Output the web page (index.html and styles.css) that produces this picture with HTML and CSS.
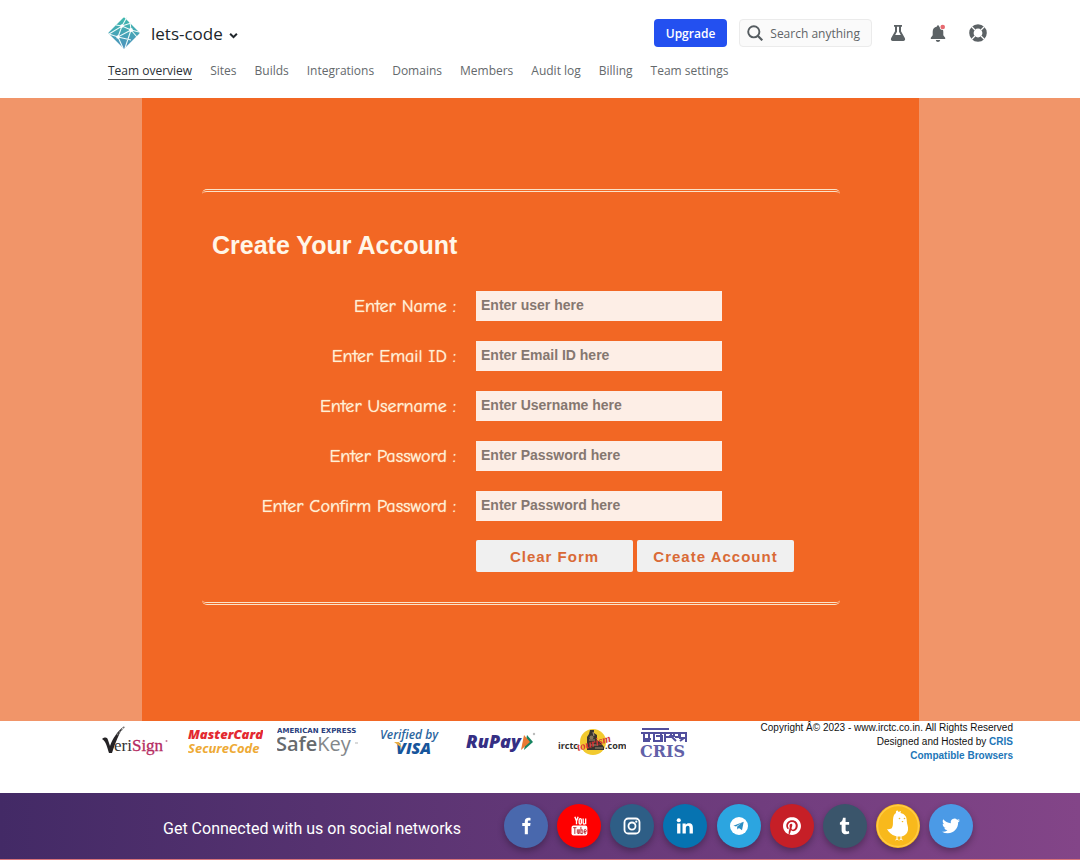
FILE: index.html
```html
<!DOCTYPE html>
<html lang="en">
<head>
<meta charset="utf-8">
<meta name="viewport" content="width=device-width, initial-scale=1">
<title>Create Your Account</title>
<link rel="stylesheet" href="styles.css">
</head>
<body>
<header class="header">
  <div class="topbar">
    <button class="team" type="button">
      <svg class="team-logo" viewBox="0 0 32 32" aria-hidden="true">
        <defs><linearGradient id="teal" x1="0" y1="0" x2="0" y2="1"><stop offset="0" stop-color="#3fb8ae"/><stop offset="1" stop-color="#4d93bd"/></linearGradient></defs>
        <path d="M16 1.500 30.500 16 16 30.500 1.500 16z" fill="url(#teal)" stroke="url(#teal)" stroke-width="2" stroke-linejoin="round"/>
        <path d="M1 17l13-8 9 4 8 2M14 9l5-9M14 9 8 8M23 13l-1-8M23 13 10 20 1 17M10 20l5 11M10 20l13 3M23 13l-3 9-3 9M14 9l-4 11M23 13l6 7M14 9l9-3" fill="none" stroke="#eefaf9" stroke-width="1.100"/>
        <circle cx="14" cy="9" r="1.700" fill="#fff"/><circle cx="23" cy="13" r="1.900" fill="#fff"/><circle cx="10" cy="20" r="1.800" fill="#fff"/>
      </svg>
      <span>lets-code</span>
      <svg class="caret" viewBox="0 0 8 8" aria-hidden="true"><path d="M1 2.500 4 5.500 7 2.500" fill="none" stroke="#20262b" stroke-width="1.800"/></svg>
    </button>
    <div class="tools">
      <button class="upgrade" type="button">Upgrade</button>
      <button class="search" type="button">
        <svg viewBox="0 0 16 16" aria-hidden="true"><circle cx="6.800" cy="6.800" r="5.600" fill="none" stroke="#555c60" stroke-width="1.900"/><path d="M11 11l4.300 4.300" stroke="#555c60" stroke-width="2.200"/></svg>
        <span>Search anything</span>
      </button>
      <button class="tool" type="button" aria-label="Labs">
        <svg viewBox="0 0 18 18" aria-hidden="true"><path d="M5 1h8v1.800h-1v4.500l3.800 6.700c.9 1.600 0 3-1.500 3H3.700c-1.500 0-2.400-1.400-1.500-3L6 7.300V2.800H5zM8 2.800v5L6.200 11h5.600L10 7.800v-5z" fill="#5c6265" fill-rule="evenodd"/></svg>
      </button>
      <button class="tool" type="button" aria-label="Notifications">
        <svg viewBox="0 0 18 18" aria-hidden="true"><path d="M8 1.500h2v1c2.800.5 4.300 2.400 4.300 5.200v3.500l1.900 2.600v1.200H1.800v-1.200l1.900-2.600V7.700C3.700 4.900 5.200 3 8 2.500zM6.800 16h4.400c-.2 1.200-1 2-2.200 2s-2-.8-2.200-2z" fill="#5c6265"/><circle cx="13.700" cy="3" r="3" fill="#fff"/><circle cx="13.700" cy="3" r="2.300" fill="#e66a70"/></svg>
      </button>
      <button class="tool" type="button" aria-label="Help">
        <svg viewBox="0 0 18 18" aria-hidden="true"><circle cx="9" cy="9" r="6.600" fill="none" stroke="#5c6265" stroke-width="4.400"/><path d="M2 2l4 4M16 2l-4 4M2 16l4-4M16 16l-4-4" stroke="#fff" stroke-width="1.200"/></svg>
      </button>
    </div>
  </div>
  <nav class="nav" aria-label="Team">
    <a class="active" href="#overview">Team overview</a>
    <a href="#sites">Sites</a>
    <a href="#builds">Builds</a>
    <a href="#integrations">Integrations</a>
    <a href="#domains">Domains</a>
    <a href="#members">Members</a>
    <a href="#audit">Audit log</a>
    <a href="#billing">Billing</a>
    <a href="#settings">Team settings</a>
  </nav>
</header>

<main class="main">
  <section class="panel">
    <form class="form">
      <h1>Create Your Account</h1>
      <div class="fields">
        <label for="name">Enter Name :</label><input id="name" type="text" placeholder="Enter user here">
        <label for="email">Enter Email ID :</label><input id="email" type="email" placeholder="Enter Email ID here">
        <label for="user">Enter Username :</label><input id="user" type="text" placeholder="Enter Username here">
        <label for="pass">Enter Password :</label><input id="pass" type="password" placeholder="Enter Password here">
        <label for="confirm">Enter Confirm Password :</label><input id="confirm" type="password" placeholder="Enter Password here">
        <div class="actions">
          <button type="reset">Clear Form</button>
          <button type="submit">Create Account</button>
        </div>
      </div>
    </form>
  </section>
</main>

<section class="partners">
  <div class="logos">
    <svg width="72" height="42" viewBox="0 0 72 42" role="img" aria-label="VeriSign">
      <path d="M0 18c3-2 5-2 6 1l2 6C11 17 15 11 21 6 17 13 13 22 10 32H7C5 26 4 20 0 18z" fill="#252326"/>
      <path d="M15 14 23 5" stroke="#777" stroke-width="1.500" stroke-dasharray="2 1"/>
      <text x="12" y="30" font-family="Liberation Serif, serif" font-size="17" fill="#333">eri<tspan fill="#b52b62" stroke="#b52b62" stroke-width=".3">Sign</tspan></text>
      <circle cx="64.500" cy="20" r="1" fill="#c77998"/>
    </svg>
    <svg width="75" height="42" viewBox="0 0 75 42" role="img" aria-label="MasterCard SecureCode">
      <g font-family="Open Sans, sans-serif" font-style="italic" font-size="13"><text x="0" y="18" font-weight="800" fill="#e32931">MasterCard</text><text x="0" y="32" font-weight="700" fill="#eeaa35">SecureCode</text></g>
    </svg>
    <svg width="89" height="42" viewBox="0 0 89 42" role="img" aria-label="American Express SafeKey">
      <text x="0" y="12" font-family="DejaVu Sans, sans-serif" font-weight="700" font-size="7" fill="#293d7c">AMERICAN EXPRESS</text>
      <text x="-1" y="30" font-family="Open Sans, sans-serif" font-size="20" fill="#666a6d"><tspan font-weight="600">Safe</tspan><tspan fill="#83878a">Key</tspan></text>
      <path d="M78 22h3" stroke="#b5b5b5"/>
    </svg>
    <svg width="72" height="42" viewBox="0 0 72 42" role="img" aria-label="Verified by VISA">
      <text x="0" y="18" font-family="Open Sans, sans-serif" font-style="italic" font-weight="600" font-size="12" fill="#2a659e">Verified by</text>
      <text x="16" y="33" font-family="Open Sans, sans-serif" font-style="italic" font-weight="800" font-size="16" fill="#17559b">VISA</text>
      <path d="M14 21h5l3 6z" fill="#eaae43"/>
    </svg>
    <svg width="78" height="42" viewBox="0 0 78 42" role="img" aria-label="RuPay">
      <text x="0" y="27" font-family="Open Sans, sans-serif" font-style="italic" font-weight="800" font-size="18" fill="#352f84">RuPay</text>
      <path d="M61 14l6 7-9 8z" fill="#168461"/><path d="M58 14l6 7-9 8z" fill="#e97a32"/><circle cx="68" cy="13" r="1.200" fill="#bbb"/>
    </svg>
    <svg width="68" height="42" viewBox="0 0 68 42" role="img" aria-label="irctc tourism .com">
      <circle cx="35" cy="21" r="13" fill="#f2ca2f"/>
      <path d="M29 29V16l2-3 1-4h4v3l3 2v5l4 3 3 4v3H35z" fill="#39352f"/><path d="M31 19h6M32 24h8M35 11l1 4M37 27h8" stroke="#a18d75" stroke-width="1.200"/><circle cx="33.500" cy="16.500" r="2" fill="#87775d"/>
      <g font-family="Open Sans, sans-serif" font-weight="700" font-size="9" fill="#33312f"><text x="0" y="28">irctc</text><text x="47" y="28">.com</text></g>
      <text x="20" y="30" transform="rotate(-16 20 30)" font-family="Liberation Serif, serif" font-style="italic" font-weight="700" font-size="11" fill="#d73535">tourism</text>
    </svg>
    <svg width="48" height="42" viewBox="0 0 48 42" role="img" aria-label="CRIS">
      <g fill="none" stroke="#514f9d" stroke-width="2"><path d="M2 8h27M1 12h46M4 12v8h5v-8M3 18h8M14 12v8h8v-5h-6M21 12v8M25 12v9M25 16h6v-4M34 12v3h-3l5 5M39 12v4h-4M40 20l4-3h-4v-4M46 12v9"/></g>
      <text x="0" y="36" font-family="DejaVu Serif, serif" font-weight="700" font-size="16" fill="#6261a8">CRIS</text>
    </svg>
  </div>
  <div class="legal">
    <p>Copyright Â© 2023 - www.irctc.co.in. All Rights Reserved</p>
    <p>Designed and Hosted by <a href="#cris">CRIS</a></p>
    <p><a href="#browsers">Compatible Browsers</a></p>
  </div>
</section>

<footer class="social">
  <p>Get Connected with us on social networks</p>
  <div class="networks">
    <a class="facebook" href="#facebook" aria-label="Facebook"><svg viewBox="0 0 24 24"><path d="M14.500 8V6.200c0-1 .4-1.400 1.500-1.400h2V1.200C17.500 1.100 16.500 1 15.400 1 12.200 1 10.400 2.700 10.400 5.800V8H7v4h3.400v11h4.100V12h3l.6-4z"/></svg></a>
    <a class="youtube" href="#youtube" aria-label="YouTube"><svg viewBox="0 0 24 24"><path d="M7 1l2 5v4M11 1 9 6M12.200 4.500v4q0 1.300 1.300 1.300t1.300-1.300v-4q0-1.300-1.300-1.300t-1.300 1.300M17 3v5.500q0 2 3 .5V3v7" fill="none" stroke="#fff" stroke-width="1.600"/><rect x="3" y="11.500" width="19" height="12" rx="2.500"/><path d="M5 14h4M7 14v7.500M10 16v4.200q0 1.200 2 .5V16v5.500M14.300 13v8.500M14.300 17q2.300-1.500 2.300.7v2.300q0 2-2.300 1M20.500 20q-2 2.500-2-.5v-2q0-2 1.300-1.500t.7 2.800h-2" fill="none" stroke="#b62027" stroke-width="1.100"/></svg></a>
    <a class="instagram" href="#instagram" aria-label="Instagram"><svg viewBox="0 0 24 24"><g fill="none" stroke="#fff" stroke-width="2.400"><rect x="2" y="2" width="20" height="20" rx="5"/><circle cx="12" cy="12" r="4.700"/></g><circle cx="17.700" cy="6.300" r="1.500"/></svg></a>
    <a class="linkedin" href="#linkedin" aria-label="LinkedIn"><svg viewBox="0 0 24 24"><circle cx="3.700" cy="4.200" r="2.700"/><path d="M1.500 8.500h4.400V22H1.500zM8.700 8.500h4.200v1.900c.8-1.400 2.200-2.200 4.200-2.200 4.300 0 5.400 2.600 5.400 6.400V22h-4.400v-6.800c0-2-.4-3.400-2.300-3.400s-2.700 1.400-2.700 3.300V22H8.700z"/></svg></a>
    <a class="telegram" href="#telegram" aria-label="Telegram"><svg viewBox="0 0 24 24"><circle cx="12" cy="12" r="12"/><path d="M4.500 11.800 18.300 6.400 16 17.800l-4.100-3-2 2-.5-3.800 6-5.200-7.300 4.700z" fill="#2c8fc4"/></svg></a>
    <a class="pinterest" href="#pinterest" aria-label="Pinterest"><svg viewBox="0 0 24 24"><path d="M12.017 0C5.396 0 .029 5.367.029 11.987c0 5.079 3.158 9.417 7.618 11.162-.105-.949-.199-2.403.041-3.439.219-.937 1.406-5.957 1.406-5.957s-.359-.72-.359-1.781c0-1.663.967-2.911 2.168-2.911 1.024 0 1.518.769 1.518 1.688 0 1.029-.653 2.567-.992 3.992-.285 1.193.6 2.165 1.775 2.165 2.128 0 3.768-2.245 3.768-5.487 0-2.861-2.063-4.869-5.008-4.869-3.41 0-5.409 2.562-5.409 5.199 0 1.033.394 2.143.889 2.741.099.12.112.225.085.345-.09.375-.293 1.199-.334 1.363-.053.225-.172.271-.401.165-1.495-.69-2.433-2.878-2.433-4.646 0-3.776 2.748-7.252 7.92-7.252 4.158 0 7.392 2.967 7.392 6.923 0 4.135-2.607 7.462-6.233 7.462-1.214 0-2.354-.629-2.758-1.379l-.749 2.848c-.269 1.045-1.004 2.352-1.498 3.146 1.123.345 2.306.535 3.55.535 6.607 0 11.985-5.365 11.985-11.987C23.97 5.39 18.592.026 11.985.026z"/></svg></a>
    <a class="tumblr" href="#tumblr" aria-label="Tumblr"><svg viewBox="0 0 24 24"><path d="M17.700 22c-1.300.7-2.900 1-4.500 1-4.300 0-5.700-2.400-5.700-5.400v-7.300H5.200V7.200C8 6.300 9 4 9.300 1h3.500v5.500h4.700v3.800h-4.700v6.700c0 1.500.7 2.200 2.100 2.200.8 0 1.600-.2 2.300-.5z"/></svg></a>
    <a class="koo" href="#koo" aria-label="Koo"><svg viewBox="0 0 44 44"><circle cx="22" cy="22" r="20.500" fill="none" stroke="#ffcb45" stroke-width="1.500"/><path d="M20 9c-.5-2 1-3 2-2l.5 1L25 7l-.5 2c4.500 1 6.500 4 6.300 8.500.1 3 1.700 5 1.200 8.500C31 32 25 33.500 19.500 32c-4-1-7-4-8.500-7 2 .5 4 .3 5-1.200 1.300-2 .8-5 1-8C17.200 12.500 18 10 20 9z"/><path d="M21 32v3l-1.500 1M21 35l1.500 1M25 32v3l-1.500 1M25 35l1.500 1" fill="none" stroke="#fff"/><circle cx="23.500" cy="14.500" r=".8" fill="#e9b92e"/><circle cx="28.500" cy="14.500" r=".8" fill="#e9b92e"/><path d="M25.500 17h2l-1 1.500z" fill="#f3b71c"/></svg></a>
    <a class="twitter" href="#twitter" aria-label="Twitter"><svg viewBox="0 0 24 24"><path d="M23.953 4.570a10 10 0 01-2.825.775 4.958 4.958 0 002.163-2.723c-.951.555-2.005.959-3.127 1.184a4.920 4.920 0 00-8.384 4.482C7.690 8.095 4.067 6.130 1.640 3.162a4.822 4.822 0 00-.666 2.475c0 1.710.870 3.213 2.188 4.096a4.904 4.904 0 01-2.228-.616v.060a4.923 4.923 0 003.946 4.827 4.996 4.996 0 01-2.212.085 4.936 4.936 0 004.604 3.417 9.867 9.867 0 01-6.102 2.105c-.390 0-.779-.023-1.170-.067a13.995 13.995 0 007.557 2.209c9.053 0 13.998-7.496 13.998-13.985 0-.210 0-.420-.015-.630A9.935 9.935 0 0024 4.590z"/></svg></a>
  </div>
</footer>
</body>
</html>
```
FILE: styles.css
```css
* { box-sizing: border-box; }
body {
  margin: 0;
  background: #fff;
  color: #111;
  font-family: "Liberation Sans", Arial, sans-serif;
}
button { font-family: inherit; border: 0; padding: 0; cursor: pointer; }
p, h1 { margin: 0; }
a { text-decoration: none; }

.header {
  padding: 17px 93px 18px 108px;
  font-family: "Open Sans", "Segoe UI", sans-serif;
}
.topbar { display: flex; justify-content: space-between; align-items: center; }
.team {
  display: flex;
  align-items: center;
  background: none;
  color: #20262b;
  font-size: 17px;
  font-weight: 500;
}
.team-logo { width: 32px; height: 32px; margin-right: 11px; }
.caret { width: 9px; height: 9px; margin: 4px 0 0 6px; }
.tools { display: flex; align-items: center; }
.upgrade {
  height: 28px;
  padding: 0 12px;
  border-radius: 4px;
  background: #2350f0;
  color: #fff;
  font-size: 12px;
  font-weight: 600;
}
.search {
  display: flex;
  align-items: center;
  gap: 7px;
  height: 28px;
  margin-left: 12px;
  padding: 0 11px 0 7px;
  border: 1px solid #ebebeb;
  border-radius: 4px;
  background: #fafafa;
  color: #5f6467;
  font-size: 12px;
  font-weight: 500;
}
.search svg { width: 16px; height: 16px; }
.tool { display: flex; margin-left: 22px; background: none; }
.tool:nth-child(3) { margin-left: 17px; }
.tool svg { width: 18px; height: 18px; }
.nav {
  display: flex;
  gap: 18px;
  margin-top: 14px;
  font-size: 12px;
  font-weight: 500;
  line-height: 16px;
}
.nav a { color: #64696c; border-bottom: 1px solid transparent; white-space: nowrap; }
.nav .active { color: #2a3035; border-color: #555; }

.main {
  display: grid;
  grid-template-columns: 142fr 777fr 161fr;
  background: #f19569;
}
.panel {
  grid-column: 2;
  padding: 91px 79px 116px 60px;
  background: #f26724;
}
.form {
  padding: 37px 0 30px;
  border: 0 solid #fbe3c8;
  border-top: 3px double #fbe3c8;
  border-bottom: 3px double #fbe3c8;
  border-radius: 5px;
}
h1 {
  padding-left: 10px;
  color: #fff6e8;
  font-size: 25px;
  line-height: 32px;
}
.fields {
  display: grid;
  grid-template-columns: 254fr 364fr;
  column-gap: 20px;
  row-gap: 18px;
  margin-top: 29px;
  align-items: center;
}
.fields label {
  padding-top: 2px;
  color: #fff0d6;
  font-family: "Comic Sans MS", "Comic Neue", cursive;
  font-size: 18px;
  line-height: 30px;
  text-align: right;
  text-shadow: 0 0 1px #fff0d6;
  white-space: nowrap;
}
.fields input {
  width: 246px;
  height: 30px;
  border: 0;
  border-left: 4px solid #fdeadf;
  padding: 0 1px 2px;
  background: #fdeee6;
  color: #5a4a42;
  font: bold 14px "Liberation Sans", Arial, sans-serif;
}
.fields input::placeholder { color: #857770; opacity: 1; }
.actions { grid-column: 2; display: flex; gap: 4px; }
.actions button {
  width: 157px;
  height: 32px;
  border-radius: 2px;
  background: #f0f0f0;
  color: #d96a36;
  font-size: 15px;
  font-weight: bold;
  letter-spacing: 1px;
}

.partners {
  display: flex;
  justify-content: space-between;
  padding: 0 67px 30px 102px;
}
.logos { display: flex; gap: 14px; }
.logos svg { display: block; flex: none; }
.legal { font-size: 10px; line-height: 14px; text-align: right; white-space: nowrap; }
.legal a { color: #2276b8; font-weight: bold; }

.social {
  display: flex;
  justify-content: space-between;
  align-items: center;
  padding: 11px 107px 11px 163px;
  border-bottom: 1px solid #d9747c;
  background: linear-gradient(90deg, #432a66, #834588);
  color: #fff;
  font-family: Roboto, "Liberation Sans", sans-serif;
  font-size: 16px;
}
.social p { padding-top: 5px; }
.networks { display: flex; justify-content: space-between; width: 469px; }
.networks a {
  display: flex;
  align-items: center;
  justify-content: center;
  width: 44px;
  height: 44px;
  border-radius: 50%;
  box-shadow: 0 3px 7px rgba(0, 0, 0, .3);
}
.networks svg { width: 18px; height: 18px; fill: #fff; }
.facebook { background: #4968ad; }
.youtube { background: #fe0000; }
.networks .youtube svg { width: 20px; height: 20px; }
.instagram { background: #2e5e86; }
.linkedin { background: #0673b1; }
.telegram { background: #2ca5e0; }
.pinterest { background: #c61f27; }
.tumblr { background: #3a556b; }
.koo { background: #f8b91c; }
.networks .koo svg { width: 44px; height: 44px; }
.twitter { background: #4b9ae6; }
```
